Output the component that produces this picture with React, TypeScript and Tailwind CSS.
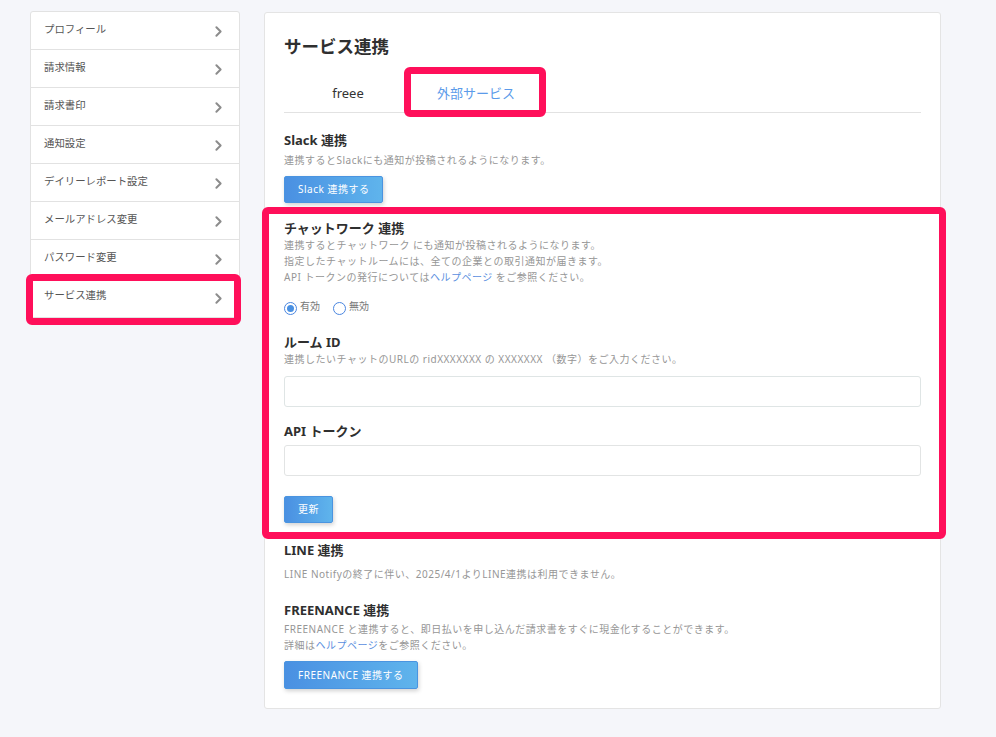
import React from 'react';
import { ChevronRight } from 'lucide-react';

const MENU = [
  'プロフィール',
  '請求情報',
  '請求書印',
  '通知設定',
  'デイリーレポート設定',
  'メールアドレス変更',
  'パスワード変更',
  'サービス連携',
];

const Title: React.FC<{ children: React.ReactNode; className?: string }> = ({ children, className = '' }) => (
  <h3 className={`text-[13px] leading-[18px] font-bold text-[#2f2f2f] ${className}`}>{children}</h3>
);

const Desc: React.FC<{ children: React.ReactNode; className?: string }> = ({ children, className = '' }) => (
  <p className={`text-[10px] leading-[16px] tracking-[0.5px] text-[#969696] ${className}`}>{children}</p>
);

const Help: React.FC<{ children: React.ReactNode }> = ({ children }) => (
  <a className="text-[#5b8fe0]">{children}</a>
);

const Btn: React.FC<{ children: React.ReactNode; className?: string }> = ({ children, className = '' }) => (
  <button className={`h-[27px] px-[13px] rounded-[2px] border border-[#4a94e0] bg-gradient-to-r from-[#4a90e2] to-[#5fb4ec] text-[10px] tracking-[0.5px] text-white shadow-[1px_2px_4px_rgba(0,0,0,0.18)] ${className}`}>
    {children}
  </button>
);

const Radio: React.FC<{ checked?: boolean; label: string }> = ({ checked, label }) => (
  <label className="flex items-center gap-[3px]">
    <span className="flex h-[13px] w-[13px] items-center justify-center rounded-full border border-[#4a86e0] bg-white">
      {checked && <span className="h-[7px] w-[7px] rounded-full bg-[#4a90e2]" />}
    </span>
    <span className="relative top-[-2px] text-[10px] leading-[13px] text-[#777]">{label}</span>
  </label>
);

export default function App() {
  return (
    <div
      className="relative flex h-[737px] items-start gap-[24px] overflow-hidden bg-[#f5f6fa] pt-[11px] pl-[30px]"
      style={{ fontFamily: '"Noto Sans", "Noto Sans CJK JP", sans-serif' }}
    >
      <ul className="w-[210px] overflow-hidden rounded-[3px] border border-[#e2e2e2] bg-white pb-[1px]">
        {MENU.map((m, i) => (
          <li
            key={m}
            className={`flex h-[38px] items-center justify-between pr-[12px] pl-[13px] ${i < MENU.length - 1 ? 'border-b border-[#e2e2e2]' : ''}`}
          >
            <span className="relative top-[-1px] text-[10.4px] text-[#555]">{m}</span>
            <ChevronRight size={17} strokeWidth={2.8} className="relative top-[1px] text-[#8c8c8c]" />
          </li>
        ))}
      </ul>

      <main className="mt-[1px] h-[697px] w-[677px] rounded-[3px] border border-[#e4e4e4] bg-white px-[19px] pt-[20px]">
        <h2 className="text-[17.5px] leading-[26px] font-bold text-[#2f2f2f]">サービス連携</h2>

        <div className="mt-[14px] flex h-[40px] border-b border-[#e2e2e2]">
          <div className="w-[128px] pt-[11px] text-center text-[13px] leading-[18px] text-[#333]">freee</div>
          <div className="w-[128px] pt-[11px] text-center text-[13px] leading-[18px] text-[#5b9bea]">外部サービス</div>
        </div>

        <section className="mt-[18px]">
          <Title>Slack 連携</Title>
          <Desc className="mt-[3px]">連携するとSlackにも通知が投稿されるようになります。</Desc>
          <Btn className="mt-[8px] block">Slack 連携する</Btn>
        </section>

        <section className="mt-[16px]">
          <Title>チャットワーク 連携</Title>
          <Desc>連携するとチャットワーク にも通知が投稿されるようになります。</Desc>
          <Desc>指定したチャットルームには、全ての企業との取引通知が届きます。</Desc>
          <Desc>
            API トークンの発行については<Help>ヘルプページ</Help> をご参照ください。
          </Desc>
          <div className="mt-[17px] flex gap-[13px]">
            <Radio checked label="有効" />
            <Radio label="無効" />
          </div>
        </section>

        <section className="mt-[18px]">
          <Title>ルーム ID</Title>
          <Desc>連携したいチャットのURLの ridXXXXXXX の XXXXXXX （数字）をご入力ください。</Desc>
          <input className="mt-[9px] block h-[31px] w-full rounded-[3px] border border-[#dfe5e5] bg-white" />
        </section>

        <section className="mt-[15px]">
          <Title>API トークン</Title>
          <input className="mt-[5px] block h-[31px] w-full rounded-[3px] border border-[#e2e4e4] bg-white" />
          <Btn className="mt-[20px] block">更新</Btn>
        </section>

        <section className="mt-[18px]">
          <Title>LINE 連携</Title>
          <Desc className="mt-[7px]">LINE Notifyの終了に伴い、2025/4/1よりLINE連携は利用できません。</Desc>
        </section>

        <section className="mt-[19px]">
          <Title>FREENANCE 連携</Title>
          <Desc className="mt-[2px]">FREENANCE と連携すると、即日払いを申し込んだ請求書をすぐに現金化することができます。</Desc>
          <Desc>
            詳細は<Help>ヘルプページ</Help>をご参照ください。
          </Desc>
          <Btn className="mt-[8px] block h-[28px] px-[13.5px]">FREENANCE 連携する</Btn>
        </section>
      </main>

      {/* 注釈の赤枠 */}
      <div className="absolute top-[274px] left-[26px] h-[51px] w-[215px] rounded-[6px] border-[7px] border-[#ff0f5a]" />
      <div className="absolute top-[67px] left-[404px] h-[50px] w-[142px] rounded-[6px] border-[7px] border-[#ff0f5a]" />
      <div className="absolute top-[207px] left-[262px] h-[332px] w-[684px] rounded-[6px] border-[7px] border-[#ff0f5a]" />
    </div>
  );
}
